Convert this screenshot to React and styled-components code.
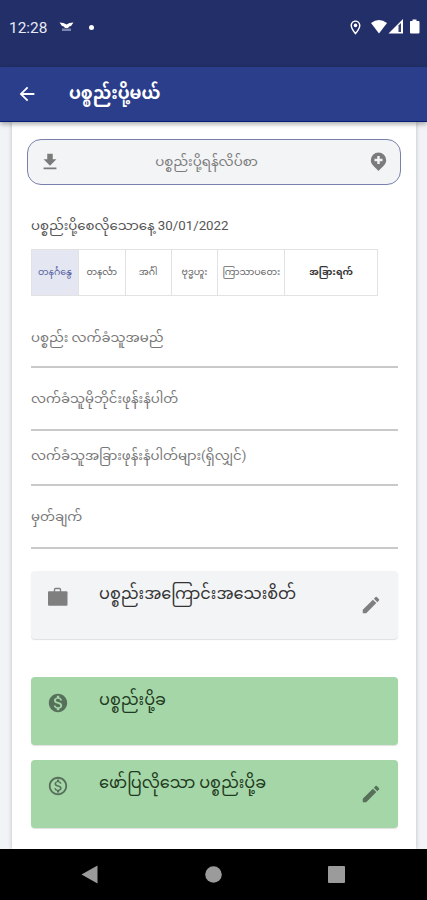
import React from 'react'
import styled, { createGlobalStyle } from 'styled-components'
import {
  MdArrowBack,
  MdEdit,
  MdFileDownload,
  MdMonetizationOn,
  MdOutlineLocationOn,
  MdOutlineMonetizationOn,
} from 'react-icons/md'

const days = [
  { label: 'တနင်္ဂနွေ', width: 47, selected: true },
  { label: 'တနင်္လာ', width: 47 },
  { label: 'အင်္ဂါ', width: 46 },
  { label: 'ဗုဒ္ဓဟူး', width: 47 },
  { label: 'ကြာသာပတေး', width: 67 },
  { label: 'အခြားရက်', width: 93, bold: true },
]

const fields = [
  { label: 'ပစ္စည်း လက်ခံသူအမည်', height: 72, baseline: 15 },
  { label: 'လက်ခံသူမိုဘိုင်းဖုန်းနံပါတ်', height: 63, baseline: 17 },
  { label: 'လက်ခံသူအခြားဖုန်းနံပါတ်များ(ရှိလျှင်)', height: 55, baseline: 15 },
  { label: 'မှတ်ချက်', height: 63, baseline: 17 },
]

const GlobalStyle = createGlobalStyle`
    * {
        box-sizing: border-box;
    }
    body {
        margin: 0;
        background: #f2f3f6;
        font-family: Roboto, "Noto Sans Myanmar", "Noto Sans", "Liberation Sans", sans-serif;
    }
`;

const Screen = styled.div`
    display: flex;
    flex-direction: column;
    width: 427px;
    height: 900px;
    overflow: hidden;
`;

const StatusBar = styled.div`
    display: flex;
    align-items: center;
    height: 67px;
    flex-shrink: 0;
    padding: 0 5px 13px 9px;
    background: #222f68;
    color: #fff;
    font-size: 15.4px;
`;

const Clock = styled.span`
    width: 50px;
    padding-top: 1px;
    color: #e6e9f6;
`;

const Dot = styled.span`
    width: 5px;
    height: 5px;
    margin-left: 14px;
    border-radius: 50%;
    background: #fff;
`;

const StatusIcons = styled.div`
    display: flex;
    align-items: center;
    gap: 7px;
    margin-left: auto;
`;

const AppBar = styled.header`
    display: flex;
    align-items: center;
    gap: 31px;
    height: 55px;
    flex-shrink: 0;
    padding: 0 17px 0 16px;
    background: #2b3e8b;
    border-bottom: 1px solid #071d78;
    box-shadow: 0 2px 5px rgba(0, 0, 0, 0.35);
    color: #fff;
    z-index: 1;
`;

const Title = styled.h1`
    margin: 0;
    padding-bottom: 2px;
    font-size: 17px;
    font-weight: 700;
    line-height: 30px;
    white-space: nowrap;
`;

const Sheet = styled.main`
    flex: 1;
    min-height: 0;
    margin: 0 11px 0 12px;
    padding: 17px 15px 0;
    background: #fff;
    box-shadow: 0 0 4px rgba(60, 64, 80, 0.3);
    overflow: hidden;
`;

const AddressButton = styled.button`
    display: flex;
    align-items: center;
    width: 374px;
    height: 46px;
    padding: 0 13px 0 11px;
    border: 1px solid #7a80ad;
    border-radius: 14px;
    background: #f3f4f6;
    color: #7b7b7b;
    font-family: inherit;
    font-size: 13.4px;
    line-height: 28px;
    white-space: nowrap;
`;

const AddressText = styled.span`
    flex: 1;
    padding-right: 18px;
    text-align: center;
`;

const Form = styled.div`
    padding: 0 4px;
`;

const DateLabel = styled.div`
    height: 64px;
    padding-top: 26px;
    color: #555;
    font-size: 13.3px;
    line-height: 30px;
    white-space: nowrap;
`;

const DayGroup = styled.div`
    display: flex;
    width: 347px;
    height: 47px;
    border: 1px solid #e2e2e2;
    border-right: 0;
`;

const Day = styled.button`
    display: flex;
    align-items: center;
    justify-content: center;
    width: ${({ $width }) => $width}px;
    padding: 0;
    border: 0;
    border-right: 1px solid #e2e2e2;
    background: ${({ $selected }) => ($selected ? '#e4e7f1' : '#fff')};
    color: ${({ $selected, $bold }) => ($selected ? '#5a64a3' : $bold ? '#333' : '#666')};
    font-family: inherit;
    font-size: 9.4px;
    font-weight: ${({ $bold }) => ($bold ? 700 : 400)};
    white-space: nowrap;
`;

const Field = styled.div`
    display: flex;
    align-items: flex-end;
    width: 367px;
    height: ${({ $height }) => $height}px;
    padding-bottom: ${({ $baseline }) => $baseline}px;
    border-bottom: 2px solid #c9c9c9;
    color: #777;
    font-size: 13.3px;
    line-height: 26px;
    white-space: nowrap;
`;

const Card = styled.section`
    display: flex;
    width: 367px;
    height: 68px;
    margin-top: ${({ $gap }) => $gap}px;
    padding: 0 16px;
    border-radius: 4px;
    background: ${({ $green }) => ($green ? '#a5d6a7' : '#f3f4f6')};
    box-shadow: 0 1px 1px rgba(0, 0, 0, 0.13);
    color: ${({ $green }) => ($green ? '#56705a' : '#7f7f7f')};
`;

const CardIcon = styled.span`
    display: flex;
    width: 52px;
    padding-top: 15px;
`;

const CardTitle = styled.div`
    flex: 1;
    padding-top: 8px;
    color: ${({ $green }) => ($green ? '#1f3a22' : '#333')};
    font-size: 16.1px;
    line-height: 30px;
    white-space: nowrap;
`;

const EditIcon = styled(MdEdit)`
    align-self: center;
    width: 22px;
    height: 22px;
`;

const NavBar = styled.nav`
    display: flex;
    align-items: center;
    justify-content: space-between;
    height: 51px;
    flex-shrink: 0;
    padding: 0 82px 0 81px;
    background: #000;
    z-index: 1;
`;

function Notification() {
  return (
    <svg width="16" height="12" viewBox="0 0 16 12">
      <path d="M0.500 1.500Q5 1.500 7.500 3.500Q10 1.500 14.500 1.500L12 5Q10 5 9 7H6Q5 5 3 5Z" fill="#fff" />
      <path d="M3 7.500H12V10H3Z" fill="#7c85ad" />
    </svg>
  )
}

function Signals() {
  return (
    <svg width="51" height="18" viewBox="0 0 51 18">
      <path d="M0 5Q8 -1 16 5L8 15.500Z" fill="#fff" />
      <path d="M17.500 15.500L32 1V15.500Z" fill="#fff" />
      <path d="M27.500 7.500V14H30V5Z" fill="#34406f" />
      <path d="M39.500 3H41.500V1.500H45.500V3H47.500Q48.500 3 48.500 4V14.500Q48.500 15.500 47.500 15.500H40Q39 15.500 39 14.500V4Q39 3 39.500 3Z" fill="#fff" />
    </svg>
  )
}

function AddPin() {
  return (
    <svg width="17" height="20" viewBox="0 0 17 20">
      <path
        d="M8.500 0.500A7.700 7.700 0 0 0 0.800 8.200C0.800 12.500 5 15 8.500 19C12 15 16.200 12.500 16.200 8.200A7.700 7.700 0 0 0 8.500 0.500Z"
        fill="#7b7b7b"
      />
      <path d="M8.500 4V12M4.500 8H12.500" stroke="#f3f4f6" strokeWidth="2.4" />
    </svg>
  )
}

function Briefcase() {
  return (
    <svg width="22" height="22" viewBox="0 0 22 22">
      <path d="M7.500 6V3.500Q7.500 2.500 8.500 2.500H12.500Q13.500 2.500 13.500 3.500V6" fill="none" stroke="currentColor" strokeWidth="1.3" />
      <rect x="1" y="5.200" width="19.500" height="14.500" rx="1" fill="currentColor" />
    </svg>
  )
}

export default function App() {
  return (
    <Screen>
      <GlobalStyle />
      <StatusBar>
        <Clock>12:28</Clock>
        <Notification />
        <Dot />
        <StatusIcons>
          <MdOutlineLocationOn size={17} />
          <Signals />
        </StatusIcons>
      </StatusBar>
      <AppBar>
        <MdArrowBack size={22} />
        <Title>ပစ္စည်းပို့မယ်</Title>
      </AppBar>
      <Sheet>
        <AddressButton>
          <MdFileDownload size={22} />
          <AddressText>ပစ္စည်းပို့ရန်လိပ်စာ</AddressText>
          <AddPin />
        </AddressButton>
        <Form>
          <DateLabel>ပစ္စည်းပို့စေလိုသောနေ့ 30/01/2022</DateLabel>
          <DayGroup>
            {days.map((day) => (
              <Day key={day.label} $width={day.width} $selected={day.selected} $bold={day.bold}>
                {day.label}
              </Day>
            ))}
          </DayGroup>
          {fields.map((field) => (
            <Field key={field.label} $height={field.height} $baseline={field.baseline}>
              {field.label}
            </Field>
          ))}
          <Card $gap={22}>
            <CardIcon><Briefcase /></CardIcon>
            <CardTitle>ပစ္စည်းအကြောင်းအသေးစိတ်</CardTitle>
            <EditIcon />
          </Card>
          <Card $gap={38} $green>
            <CardIcon><MdMonetizationOn size={22} /></CardIcon>
            <CardTitle $green>ပစ္စည်းပို့ခ</CardTitle>
          </Card>
          <Card $gap={15} $green>
            <CardIcon><MdOutlineMonetizationOn size={22} /></CardIcon>
            <CardTitle $green>ဖော်ပြလိုသော ပစ္စည်းပို့ခ</CardTitle>
            <EditIcon />
          </Card>
        </Form>
      </Sheet>
      <NavBar>
        <svg width="17" height="19" viewBox="0 0 17 19"><path d="M16.500 0.500V18.500L0.500 9.500Z" fill="#9b9b9b" /></svg>
        <svg width="17" height="17" viewBox="0 0 17 17"><circle cx="8.500" cy="8.500" r="8.300" fill="#9b9b9b" /></svg>
        <svg width="17" height="17" viewBox="0 0 17 17"><rect width="17" height="17" rx="1" fill="#9b9b9b" /></svg>
      </NavBar>
    </Screen>
  )
}
